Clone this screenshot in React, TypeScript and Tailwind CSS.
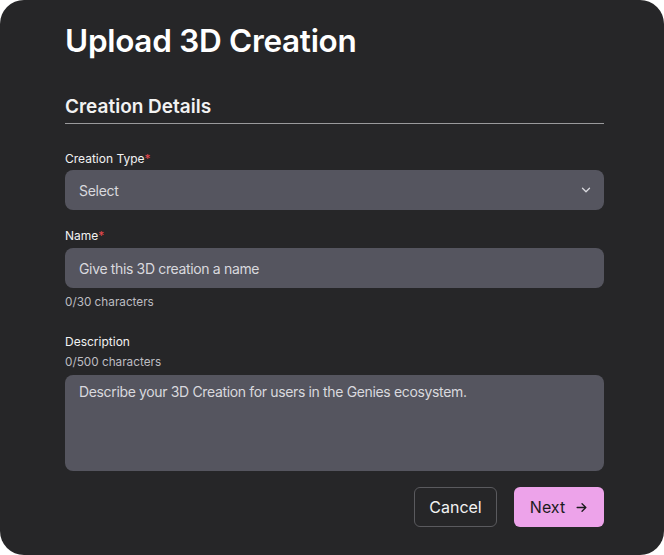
import React from "react";

const Label: React.FC<{ text: string; required?: boolean }> = ({ text, required }) => (
	<div className="text-[12px] leading-[16px] text-[#f2f2f2]">
		{text}
		{required && <span className="text-[#e5484d]">*</span>}
	</div>
);

export default function App() {
	return (
		<div className="w-[664px] h-[555px] bg-white" style={{ fontFamily: "Inter, 'Noto Sans', sans-serif" }}>
			<div className="w-full h-full bg-[#262628] rounded-[24px] pl-[65px] pr-[60px] pt-[23px] flex flex-col">
				<h1 className="text-[31.5px] leading-[36px] font-semibold text-white tracking-[-0.3px]">
					Upload 3D Creation
				</h1>

				<h2 className="mt-[36px] text-[19px] leading-[24px] font-semibold text-[#f2f2f2]">
					Creation Details
				</h2>
				<div className="mt-[4px] h-px bg-[#9a9a9c]" />

				<div className="mt-[27px]">
					<Label text="Creation Type" required />
				</div>
				<button className="mt-[3px] h-[40px] w-full rounded-[8px] bg-[#55555f] pl-[14px] pr-[11px] flex items-center justify-between text-[14px] tracking-[-0.3px] text-[#d9d9de]">
					<span>Select</span>
					<svg width="14" height="14" viewBox="0 0 24 24" fill="none" stroke="#d9d9de" strokeWidth="2.2" strokeLinecap="round" strokeLinejoin="round">
						<path d="M6 9l6 6 6-6" />
					</svg>
				</button>

				<div className="mt-[18px]">
					<Label text="Name" required />
				</div>
				<div className="mt-[4px] h-[40px] w-full rounded-[8px] bg-[#55555f] px-[14px] flex items-center text-[14px] tracking-[-0.35px] text-[#d9d9de]">
					Give this 3D creation a name
				</div>
				<div className="mt-[7px] text-[11.75px] leading-[14px] text-[#bdbdc2]">0/30 characters</div>

				<div className="mt-[25px]">
					<Label text="Description" />
				</div>
				<div className="mt-[5px] text-[11.75px] leading-[14px] text-[#bdbdc2]">0/500 characters</div>
				<div className="mt-[6px] h-[96px] w-full rounded-[8px] bg-[#55555f] px-[14px] pt-[8px] text-[14px] leading-[18px] tracking-[-0.35px] text-[#d9d9de]">
					Describe your 3D Creation for users in the Genies ecosystem.
				</div>

				<div className="mt-[16px] flex justify-end gap-[17px]">
					<button className="h-[40px] w-[83px] rounded-[6px] border border-[#5a5a5e] text-[16px] text-[#f2f2f2]">
						Cancel
					</button>
					<button className="h-[40px] w-[90px] rounded-[6px] bg-[#eda3ea] flex items-center justify-center gap-[10px] text-[16px] text-[#1c1c1e]">
						Next
						<svg width="13" height="13" viewBox="0 0 24 24" fill="none" stroke="#1c1c1e" strokeWidth="2.5" strokeLinecap="round" strokeLinejoin="round">
							<path d="M4 12h16M13 5l7 7-7 7" />
						</svg>
					</button>
				</div>
			</div>
		</div>
	);
}
